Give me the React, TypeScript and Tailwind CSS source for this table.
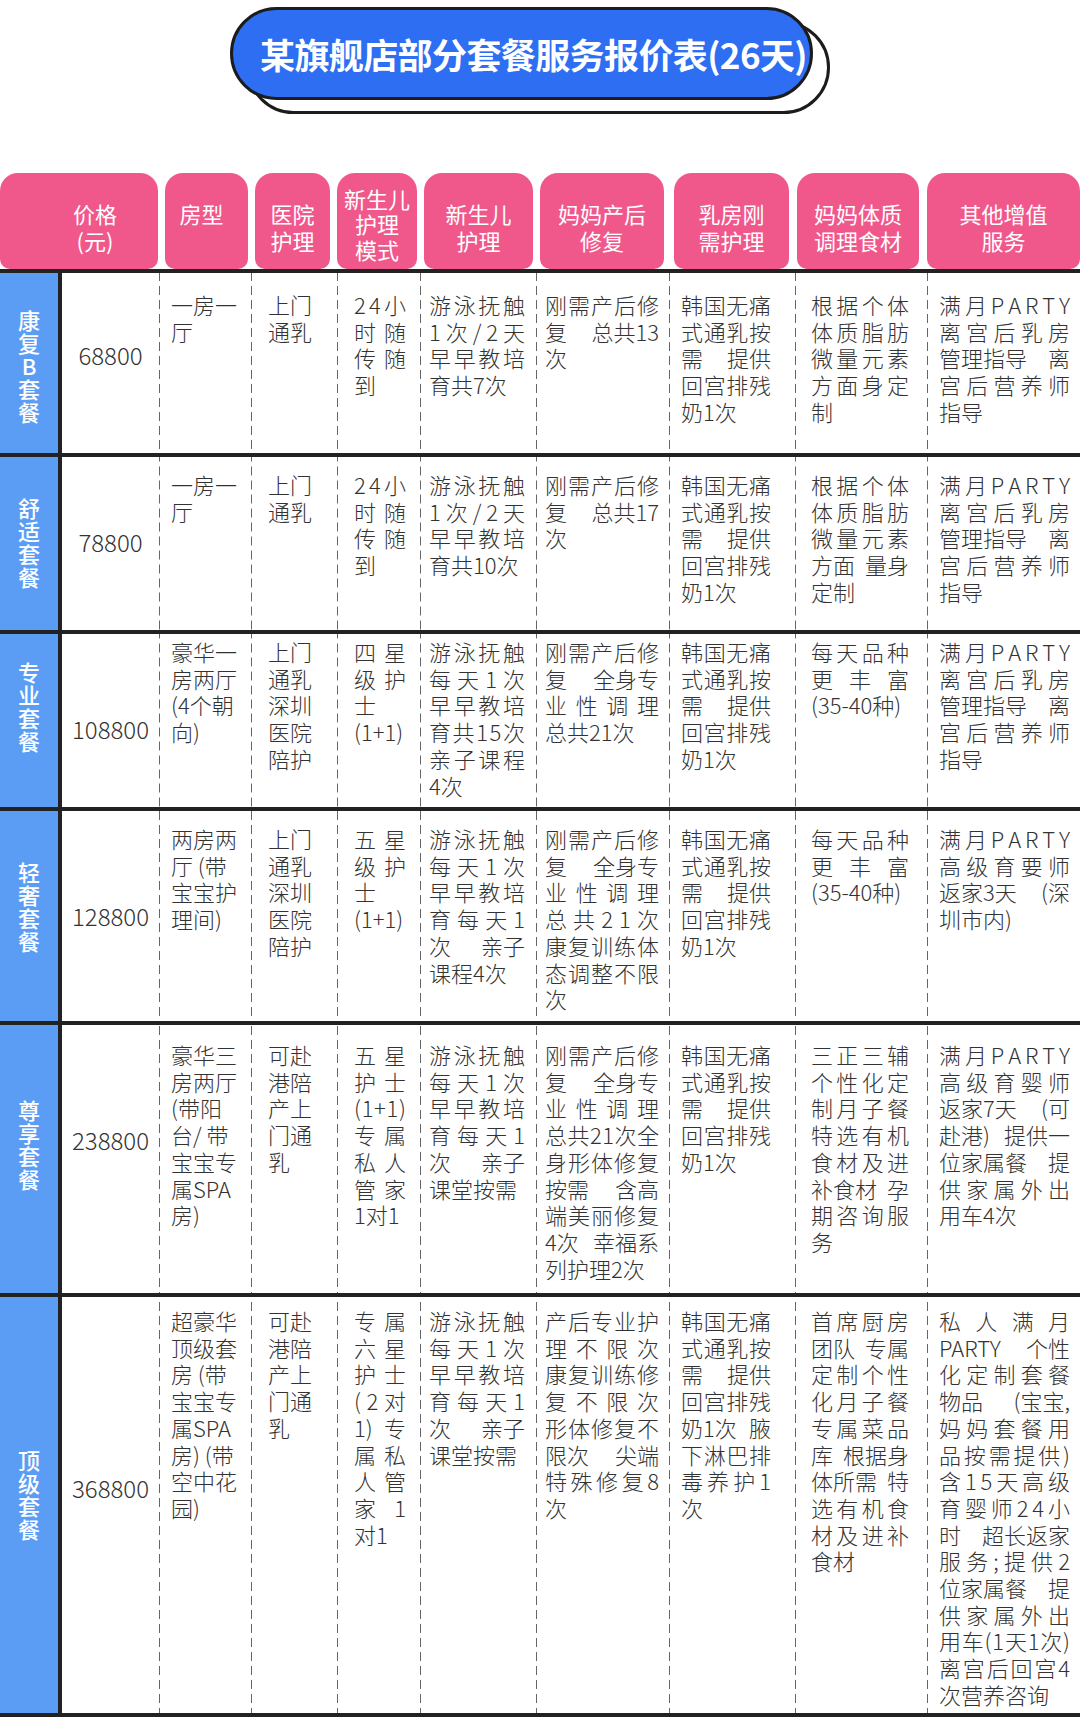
import React from 'react';

type Row = {
  label: string;
  price: string;
  height: string;
  labelPad: string;
  pricePad: string;
  textPad: string;
  cells: string[][];
};

const RUPTURE = ['韩国无痛', '式通乳按', '需 提供', '回宫排残', '奶1次'];
const PARTY = ['满月PARTY', '离宫后乳房', '管理指导 离', '宫后营养师', '指导'];

const rows: Row[] = [
  {
    label: '康复B套餐',
    price: '68800',
    height: 'h-[184px]',
    labelPad: 'pt-[4px]',
    pricePad: 'pb-[16px]',
    textPad: 'pt-[18px]',
    cells: [
      ['一房一', '厅'],
      ['上门', '通乳'],
      ['24小', '时随', '传随', '到'],
      ['游泳抚触', '1次/2天', '早早教培', '育共7次'],
      ['刚需产后修', '复 总共13', '次'],
      RUPTURE,
      ['根据个体', '体质脂肪', '微量元素', '方面身定', '制'],
      PARTY,
    ],
  },
  {
    label: '舒适套餐',
    price: '78800',
    height: 'h-[177px]',
    labelPad: 'pb-[4px]',
    pricePad: 'pb-[4px]',
    textPad: 'pt-[14px]',
    cells: [
      ['一房一', '厅'],
      ['上门', '通乳'],
      ['24小', '时随', '传随', '到'],
      ['游泳抚触', '1次/2天', '早早教培', '育共10次'],
      ['刚需产后修', '复 总共17', '次'],
      RUPTURE,
      ['根据个体', '体质脂肪', '微量元素', '方面 量身', '定制'],
      PARTY,
    ],
  },
  {
    label: '专业套餐',
    price: '108800',
    height: 'h-[177px]',
    labelPad: 'pb-[30px]',
    pricePad: 'pt-[16px]',
    textPad: 'pt-[4px]',
    cells: [
      ['豪华一', '房两厅', '(4个朝', '向)'],
      ['上门', '通乳', '深圳', '医院', '陪护'],
      ['四星', '级护', '士', '(1+1)'],
      ['游泳抚触', '每天1次', '早早教培', '育共15次', '亲子课程', '4次'],
      ['刚需产后修', '复 全身专', '业性调理', '总共21次'],
      RUPTURE,
      ['每天品种', '更丰富', '(35-40种)'],
      PARTY,
    ],
  },
  {
    label: '轻奢套餐',
    price: '128800',
    height: 'h-[214px]',
    labelPad: 'pb-[20px]',
    pricePad: '',
    textPad: 'pt-[14px]',
    cells: [
      ['两房两', '厅 (带', '宝宝护', '理间)'],
      ['上门', '通乳', '深圳', '医院', '陪护'],
      ['五星', '级护', '士', '(1+1)'],
      ['游泳抚触', '每天1次', '早早教培', '育每天1', '次 亲子', '课程4次'],
      ['刚需产后修', '复 全身专', '业性调理', '总共21次', '康复训练体', '态调整不限', '次'],
      RUPTURE,
      ['每天品种', '更丰富', '(35-40种)'],
      ['满月PARTY', '高级育要师', '返家3天 (深', '圳市内)'],
    ],
  },
  {
    label: '尊享套餐',
    price: '238800',
    height: 'h-[272px]',
    labelPad: 'pb-[30px]',
    pricePad: 'pb-[38px]',
    textPad: 'pt-[16px]',
    cells: [
      ['豪华三', '房两厅', '(带阳', '台/ 带', '宝宝专', '属SPA', '房)'],
      ['可赴', '港陪', '产上', '门通', '乳'],
      ['五星', '护士', '(1+1)', '专属', '私人', '管家', '1对1'],
      ['游泳抚触', '每天1次', '早早教培', '育每天1', '次 亲子', '课堂按需'],
      ['刚需产后修', '复 全身专', '业性调理', '总共21次全', '身形体修复', '按需 含高', '端美丽修复', '4次 幸福系', '列护理2次'],
      RUPTURE,
      ['三正三辅', '个性化定', '制月子餐', '特选有机', '食材及进', '补食材 孕', '期咨询服', '务'],
      ['满月PARTY', '高级育婴师', '返家7天 (可', '赴港) 提供一', '位家属餐 提', '供家属外出', '用车4次'],
    ],
  },
  {
    label: '顶级套餐',
    price: '368800',
    height: 'h-[420px]',
    labelPad: 'pb-[22px]',
    pricePad: 'pb-[34px]',
    textPad: 'pt-[10px]',
    cells: [
      ['超豪华', '顶级套', '房 (带', '宝宝专', '属SPA', '房) (带', '空中花', '园)'],
      ['可赴', '港陪', '产上', '门通', '乳'],
      ['专属', '六星', '护士', '(2对', '1) 专', '属私', '人管', '家 1', '对1'],
      ['游泳抚触', '每天1次', '早早教培', '育每天1', '次 亲子', '课堂按需'],
      ['产后专业护', '理不限次', '康复训练修', '复不限次', '形体修复不', '限次 尖端', '特殊修复8', '次'],
      ['韩国无痛', '式通乳按', '需 提供', '回宫排残', '奶1次 腋', '下淋巴排', '毒养护1', '次'],
      ['首席厨房', '团队 专属', '定制个性', '化月子餐', '专属菜品', '库 根据身', '体所需 特', '选有机食', '材及进补', '食材'],
      [
        '私人满月',
        'PARTY 个性',
        '化定制套餐',
        '物品 (宝宝,',
        '妈妈套餐用',
        '品按需提供)',
        '含15天高级',
        '育婴师24小',
        '时 超长返家',
        '服务;提供2',
        '位家属餐 提',
        '供家属外出',
        '用车(1天1次)',
        '离宫后回宫4',
        '次营养咨询',
      ],
    ],
  },
];

const cols = [
  { w: 'w-[92px]', pl: 'pl-[12px]', tw: 'w-[67px]', natural: true },
  { w: 'w-[86px]', pl: 'pl-[17px]', tw: 'w-[44px]', natural: false },
  { w: 'w-[83px]', pl: 'pl-[17px]', tw: 'w-[52px]', natural: false },
  { w: 'w-[116px]', pl: 'pl-[9px]', tw: 'w-[96px]', natural: false },
  { w: 'w-[133px]', pl: 'pl-[9px]', tw: 'w-[114px]', natural: false },
  { w: 'w-[126px]', pl: 'pl-[12px]', tw: 'w-[90px]', natural: false },
  { w: 'w-[132px]', pl: 'pl-[16px]', tw: 'w-[98px]', natural: false },
  { w: 'w-[153px]', pl: 'pl-[12px]', tw: 'w-[131px]', natural: false },
];

const heads = [
  { lines: ['价格', '(元)'], cls: 'w-[158px] pl-[32px] pt-[11px] leading-[27px]' },
  { lines: ['房型'], cls: 'ml-[7px] w-[83px] pr-[10px] pb-[16px] leading-[27px]' },
  { lines: ['医院', '护理'], cls: 'ml-[7px] w-[75px] pt-[11px] leading-[27px]' },
  { lines: ['新生儿', '护理', '模式'], cls: 'ml-[7px] w-[80px] pt-[6px] leading-[25.5px]' },
  { lines: ['新生儿', '护理'], cls: 'ml-[7px] w-[109px] pt-[11px] leading-[27px]' },
  { lines: ['妈妈产后', '修复'], cls: 'ml-[7px] w-[124px] pt-[11px] leading-[27px]' },
  { lines: ['乳房刚', '需护理'], cls: 'ml-[10px] w-[115px] pt-[11px] leading-[27px]' },
  { lines: ['妈妈体质', '调理食材'], cls: 'ml-[8px] w-[122px] pt-[11px] leading-[27px]' },
  { lines: ['其他增值', '服务'], cls: 'ml-[8px] w-[153px] pt-[11px] leading-[27px]' },
];

function Line({ text, last, natural }: { text: string; last: boolean; natural: boolean }) {
  if (last || natural) return <div className="whitespace-pre">{text}</div>;
  if (text.includes(' ')) {
    return (
      <div className="flex justify-between">
        {text.split(' ').map((p, i) => (
          <span key={i}>{p}</span>
        ))}
      </div>
    );
  }
  return (
    <div className="flex justify-between">
      {Array.from(text).map((c, i) => (
        <span key={i}>{c}</span>
      ))}
    </div>
  );
}

export default function App() {
  return (
    <div className="w-[1080px] h-[1722px] bg-white overflow-hidden font-['Noto_Sans_CJK_SC',sans-serif]">
      {/* title */}
      <div className="h-[173px] pt-[7px] pl-[230px]">
        <div className="relative w-[583px] h-[93px]">
          <div className="absolute left-[17px] top-[14px] w-full h-full rounded-full border-[3px] border-[#1c1c1c] bg-white" />
          <div className="relative flex h-full items-center rounded-full border-[3px] border-[#1c1c1c] bg-[#2d6ef2] pl-[27px]">
            <span className="text-[35px] font-bold tracking-[-0.6px] text-white leading-none whitespace-nowrap">
              某旗舰店部分套餐服务报价表(26天)
            </span>
          </div>
        </div>
      </div>

      {/* header */}
      <div className="flex h-[100px] border-b-4 border-[#222]">
        {heads.map((h, i) => (
          <div
            key={i}
            className={`flex h-full flex-col items-center justify-center rounded-t-[18px] rounded-b-[10px] bg-[#f0588b] text-[22px] text-white ${h.cls}`}
          >
            {h.lines.map((l) => (
              <div key={l}>{l}</div>
            ))}
          </div>
        ))}
      </div>

      {/* body */}
      {rows.map((r) => (
        <div key={r.label} className={`flex border-b-4 border-[#222] ${r.height}`}>
          <div
            className={`flex w-[62px] flex-col items-center justify-center border-r-4 border-[#222] bg-[#5b9df5] text-[22px] font-medium leading-[23px] text-white ${r.labelPad}`}
          >
            {Array.from(r.label).map((c, i) => (
              <span key={i}>{c}</span>
            ))}
          </div>
          <div
            className={`flex w-[97px] items-center justify-center text-[24px] font-light text-[#333] ${r.pricePad}`}
          >
            {r.price}
          </div>
          {r.cells.map((lines, ci) => {
            const col = cols[ci];
            return (
              <div
                key={ci}
                className={`h-full bg-[linear-gradient(to_bottom,#666_9px,transparent_9px)] bg-[length:1px_14px] bg-repeat-y bg-left ${col.w} ${col.pl} ${r.textPad}`}
              >
                <div className={`${col.tw} text-[22px] font-light leading-[26.7px] text-[#333]`}>
                  {lines.map((l, li) => (
                    <Line key={li} text={l} last={li === lines.length - 1} natural={col.natural} />
                  ))}
                </div>
              </div>
            );
          })}
        </div>
      ))}
    </div>
  );
}
